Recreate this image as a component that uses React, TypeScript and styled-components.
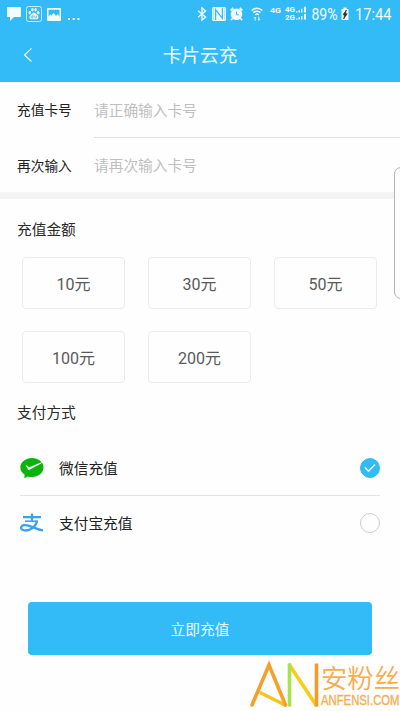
import React, { useState } from 'react';
import styled, { createGlobalStyle } from 'styled-components';

const BLUE = '#33bbf8';

const GlobalStyle = createGlobalStyle`
  * {
    box-sizing: border-box;
  }
  body {
    margin: 0;
    background-color: #fefefe;
    font-family: Roboto, 'Noto Sans CJK SC', sans-serif;
    color: #2b2b2b;
  }
  button,
  input {
    font-family: inherit;
  }
`;

const Screen = styled.div`
  position: relative;
  display: flex;
  flex-direction: column;
  width: 400px;
  height: 711px;
  overflow: hidden;
`;
const Header = styled.header`
  height: 82px;
  background-color: ${BLUE};
  color: #f2fcff;
`;
const StatusBar = styled.div`
  display: flex;
  justify-content: space-between;
  align-items: center;
  height: 28px;
  padding: 0 8px 0 7px;
`;
const StatusGroup = styled.div`
  display: flex;
  align-items: center;
  height: 28px;
`;
const StatusIcon = styled.svg<{ gap?: number }>`
  display: block;
  flex: none;
  margin-left: ${props => props.gap || 0}px;
  overflow: visible;
`;
const Navigation = styled.div`
  display: grid;
  grid-template-columns: 56px 1fr 56px;
  align-items: center;
  height: 54px;
`;
const BackButton = styled.button`
  display: flex;
  align-items: center;
  height: 54px;
  padding: 0 0 0 23px;
  border: 0;
  background: none;
  color: inherit;
`;
const Title = styled.h1`
  margin: 0;
  padding-top: 1px;
  font-size: 18.7px;
  line-height: 28px;
  font-weight: 400;
  text-align: center;
`;
const Form = styled.div`
  height: 117px;
  border-bottom: 7px solid #f4f4f4;
`;
const FieldRow = styled.label`
  display: flex;
  align-items: center;
  height: 55px;
  padding-left: 17px;
  &:first-child {
    height: 56px;
  }
`;
const FieldLabel = styled.span`
  width: 77px;
  font-size: 13.7px;
  line-height: 20px;
  color: #222;
`;
const FieldInput = styled.input<{ underline?: boolean }>`
  flex: 1;
  min-width: 0;
  height: 56px;
  padding: 2px 0 0;
  border: 0;
  border-bottom: 1px solid ${props => (props.underline ? '#dfdfdf' : 'transparent')};
  background: none;
  outline: none;
  font-size: 14.7px;
  &::placeholder {
    color: #bfbfbf;
    opacity: 1;
  }
`;
const SectionTitle = styled.h2`
  margin: 0;
  padding-left: 17px;
  font-size: 14.7px;
  line-height: 22px;
  font-weight: 400;
`;
const AmountSection = styled.section`
  padding-top: 20px;
`;
const AmountGrid = styled.div`
  display: grid;
  grid-template-columns: repeat(3, 103px);
  grid-auto-rows: 52px;
  gap: 22px 23px;
  padding: 16px 22px 19px;
`;
const AmountButton = styled.button`
  padding: 0;
  border: 1px solid #ebebeb;
  border-radius: 4px;
  background-color: #fefefe;
  font-size: 16px;
  color: #5a5a5a;
`;
const PaySection = styled.section`
  display: flex;
  flex-direction: column;
`;
const PayList = styled.div`
  padding: 16px 20px 0;
`;
const PayRow = styled.div`
  display: flex;
  align-items: center;
  height: 55px;
  & + & {
    border-top: 1px solid #e2e2e2;
  }
`;
const PayName = styled.span`
  flex: 1;
  padding: 2px 0 0 15px;
  font-size: 14.7px;
  line-height: 22px;
  color: #222;
`;
const Radio = styled.button<{ checked: boolean }>`
  display: flex;
  align-items: center;
  justify-content: center;
  width: 20px;
  height: 20px;
  padding: 0;
  border: 1px solid ${props => (props.checked ? BLUE : '#ccc')};
  border-radius: 50%;
  background-color: ${props => (props.checked ? BLUE : '#fefefe')};
`;
const SubmitButton = styled.button`
  height: 53px;
  margin: 52px 28px 0;
  border: 0;
  border-radius: 4px;
  background-color: ${BLUE};
  font-size: 14.7px;
  color: #e9fbff;
`;
const EdgePanel = styled.div`
  position: absolute;
  top: 167px;
  right: -8px;
  width: 14px;
  height: 132px;
  border: 1px solid #b5b5b5;
  border-radius: 7px;
  background-color: #fdfdfd;
`;
const Watermark = styled.svg`
  position: absolute;
  right: 0;
  bottom: 0;
  overflow: visible;
`;

const BackIcon = () => (
  <svg width="10" height="14" viewBox="0 0 10 14" fill="none" stroke="currentColor" strokeWidth="1.1">
    <path d="M8.5 .5 1.5 7l7 6.5" />
  </svg>
);

const Notifications = () => (
  <StatusGroup>
    <StatusIcon width="14" height="14" viewBox="0 0 14 14" fill="currentColor">
      <path d="M1 0h12q1 0 1 1v8q0 1-1 1H7l-4 4v-4H1q-1 0-1-1V1q0-1 1-1z" />
    </StatusIcon>
    <StatusIcon gap={5} width="16" height="16" viewBox="0 0 16 16" fill="currentColor">
      <rect x=".5" y=".5" width="15" height="15" rx="2" fill="none" stroke="currentColor" strokeOpacity=".75" />
      <ellipse cx="3.8" cy="6.7" rx="1.3" ry="1.7" />
      <ellipse cx="6.4" cy="3.8" rx="1.2" ry="1.8" />
      <ellipse cx="9.6" cy="3.8" rx="1.2" ry="1.8" />
      <ellipse cx="12.2" cy="6.7" rx="1.3" ry="1.7" />
      <path d="M8 6.4c1.2 0 1.8 1.2 2.8 2.2 1.5 1.4 2 2.2 1.6 3.4-.5 1.6-2.5 1.4-4.4 1.2-1.9.2-3.9.4-4.4-1.2-.4-1.2.1-2 1.6-3.4 1-1 1.6-2.2 2.8-2.2z" />
      <path d="M7 8.8v3.2H5.8a.9.9 0 0 1 0-1.8H7M8.8 9.7v2.1h1.6V9.7" fill="none" stroke={BLUE} strokeWidth=".7" />
    </StatusIcon>
    <StatusIcon gap={5} width="14" height="13" viewBox="0 0 14 13">
      <rect width="14" height="13" rx="1" fill="currentColor" />
      <path d="M1.5 1.8h11v7L10.7 6 9 8 6.5 5 4.5 7.6 3.2 6.2 1.5 8.8z" fill={BLUE} />
    </StatusIcon>
    <StatusIcon gap={7} width="12" height="13" viewBox="0 0 12 13" fill="currentColor">
      <path d="M0 10h2v2H0zM4.7 10h2v2h-2zM9.4 10h2v2h-2z" />
    </StatusIcon>
  </StatusGroup>
);

const SystemStatus = () => (
  <StatusGroup>
    <StatusIcon width="10" height="14" viewBox="0 0 10 14" fill="none" stroke="currentColor" strokeWidth="1.3">
      <path d="M1 3.7 8.6 10 5 13V1l3.6 3L1 10.3" />
    </StatusIcon>
    <StatusIcon gap={5} width="14" height="14" viewBox="0 0 14 14">
      <rect width="14" height="14" rx="1.5" fill="currentColor" />
      <path d="M3.6 13V2.6L10.4 11.4V1" fill="none" stroke={BLUE} strokeWidth="1.3" />
      <path d="M1.4 1v12M12.6 1v12" stroke={BLUE} strokeWidth=".4" />
    </StatusIcon>
    <StatusIcon gap={4} width="13" height="14" viewBox="0 0 13 14">
      <path d="M.7 3.5 3.3 1M12.3 3.5 9.7 1M2.5 11.5.9 13.2M10.5 11.5l1.6 1.7" stroke="currentColor" strokeWidth="1.8" />
      <circle cx="6.5" cy="7.3" r="5.8" fill="currentColor" />
      <path d="M6.5 4.5v3.3H9" fill="none" stroke={BLUE} strokeWidth="1" />
    </StatusIcon>
    <StatusIcon gap={8} width="12" height="14" viewBox="0 0 12 14" fill="none" stroke="currentColor" strokeWidth="1.5">
      <path d="M.6 3.5q5.4-4.6 10.8 0M2.4 5.7q3.6-3 7.2 0M4.2 7.8q1.8-1.4 3.6 0" />
      <path d="M4.2 13.5V10M3 11.2l1.2-1.2M7.8 9.8v3.5M9 12.1l-1.2 1.2" strokeWidth="1" />
    </StatusIcon>
    <StatusIcon gap={6} width="82" height="28" viewBox="0 -5 82 28" fill="currentColor" fontFamily="Roboto">
      <text x="1" y="8" fontSize="8" fontWeight="700" textLength="11" lengthAdjust="spacingAndGlyphs">4G</text>
      <text x="16" y="6.8" fontSize="7.5" fontWeight="700" textLength="10" lengthAdjust="spacingAndGlyphs">4G</text>
      <text x="16" y="15" fontSize="7.5" fontWeight="700" textLength="10" lengthAdjust="spacingAndGlyphs">2G</text>
      <path d="M27 6.3h1.5v1.2H27zM29.500 5.200H31v2.300h-1.500zM32 3.800h1.500v3.700H32zM35 1.800h2v5.700h-2zM27 13.400h1.500v1.200H27zM29.500 12.300H31v2.300h-1.500zM32 10.900h1.500v3.700H32zM35 8.900h2v5.700h-2z" />
      <text x="42.5" y="15" fontSize="16.5" textLength="26" lengthAdjust="spacingAndGlyphs">89%</text>
      <path d="M74.5 2.5h3V4h2v11h-7V4h2z" />
      <path d="M77.4 5 74 9.8h1.7L74.6 14l3.6-5.2h-1.8z" fill="#222" stroke="#222" strokeWidth=".6" />
    </StatusIcon>
    <StatusIcon gap={3} width="38" height="28" viewBox="0 -5 38 28" fill="currentColor" fontFamily="Roboto">
      <text x="1" y="15" fontSize="16.5" textLength="36.5" lengthAdjust="spacingAndGlyphs">17:44</text>
    </StatusIcon>
  </StatusGroup>
);

const WechatPayIcon = () => (
  <svg width="24" height="22" viewBox="0 0 24 22">
    <path d="M12 1c6.5 0 11.5 4.3 11.5 9.5S18.500 20 12 20c-1.500 0-3-.2-4.300-.6L4.200 21.300l.5-3.600C2 16 .3 13.400.3 10.500.3 5.300 5.500 1 12 1z" fill="#0cb30c" />
    <path d="M5.7 8.3c.7-.5 1.5.3 3.7 1.900L22 5.100l-.5 1.200L9.500 12.800c-.7.400-1.100.2-1.400-.3z" fill="#fff" />
  </svg>
);

const AlipayIcon = () => (
  <svg width="24" height="20" viewBox="0 0 24 20" fill="none" stroke="#3ba0ee">
    <path d="M3 4.2h18M12 .5v7.2" strokeWidth="2.3" />
    <path d="M5 8.2h13" strokeWidth="1.6" />
    <path d="M17.2 8.2c-1.700 5.600-6.400 9.300-11.500 9.300-3.400 0-4.900-1.300-4.500-3.200.5-2.300 4-2.700 7.300-1.700 4.300 1.300 9 4 14.500 4.800" strokeWidth="2.3" />
  </svg>
);

const Logo = () => (
  <Watermark width="152" height="52" viewBox="248 659 152 52" fill="none">
    <g strokeWidth="3.6" strokeLinecap="round">
      <path d="m289.5 665 26.5 40" stroke="#f3cf1b" />
      <path d="M289.5 663.5v43" stroke="#a9e34b" strokeLinecap="butt" />
      <path d="M316.5 663.5v43" stroke="#f69a2b" strokeLinecap="butt" />
      <path d="m261 693 24 12" stroke="#f3c51e" />
      <path d="m252 705 17-40 16.5 40" stroke="#f79f2d" />
    </g>
    <g fill="#f8ac4c">
      <text x="321" y="688" fontSize="26" fontWeight="350" fontFamily="Noto Sans CJK SC" textLength="79" lengthAdjust="spacingAndGlyphs">安粉丝</text>
      <text x="321" y="705" fontSize="14.3" fontFamily="Liberation Sans" stroke="#f8ac4c" strokeWidth=".3" textLength="78.5" lengthAdjust="spacingAndGlyphs">ANFENSI.COM</text>
    </g>
  </Watermark>
);

const amounts = [10, 30, 50, 100, 200];
const methods = [
  { id: 'wechat', name: '微信充值', icon: <WechatPayIcon /> },
  { id: 'alipay', name: '支付宝充值', icon: <AlipayIcon /> },
];

export default function App() {
  const [method, setMethod] = useState('wechat');

  return (
    <Screen>
      <GlobalStyle />
      <Header>
        <StatusBar>
          <Notifications />
          <SystemStatus />
        </StatusBar>
        <Navigation>
          <BackButton>
            <BackIcon />
          </BackButton>
          <Title>卡片云充</Title>
        </Navigation>
      </Header>
      <Form>
        <FieldRow>
          <FieldLabel>充值卡号</FieldLabel>
          <FieldInput underline placeholder="请正确输入卡号" />
        </FieldRow>
        <FieldRow>
          <FieldLabel>再次输入</FieldLabel>
          <FieldInput placeholder="请再次输入卡号" />
        </FieldRow>
      </Form>
      <AmountSection>
        <SectionTitle>充值金额</SectionTitle>
        <AmountGrid>
          {amounts.map(amount => (
            <AmountButton key={amount}>{amount}元</AmountButton>
          ))}
        </AmountGrid>
      </AmountSection>
      <PaySection>
        <SectionTitle>支付方式</SectionTitle>
        <PayList>
          {methods.map(({ id, name, icon }) => (
            <PayRow key={id}>
              {icon}
              <PayName>{name}</PayName>
              <Radio checked={method === id} onClick={() => setMethod(id)}>
                {method === id && (
                  <svg width="12" height="10" viewBox="0 0 12 10" fill="none" stroke="#e8faff" strokeWidth="1.6">
                    <path d="m1 4.5 3.5 3.7L11 1.5" />
                  </svg>
                )}
              </Radio>
            </PayRow>
          ))}
        </PayList>
        <SubmitButton>立即充值</SubmitButton>
      </PaySection>
      <EdgePanel />
      <Logo />
    </Screen>
  );
}
